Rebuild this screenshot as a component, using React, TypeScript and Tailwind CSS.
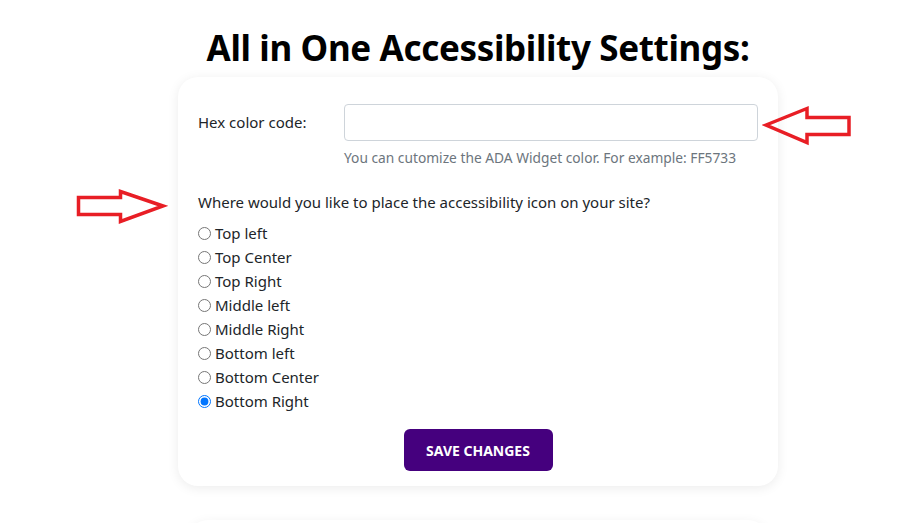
import React from "react";

const options = [
  "Top left",
  "Top Center",
  "Top Right",
  "Middle left",
  "Middle Right",
  "Bottom left",
  "Bottom Center",
  "Bottom Right",
];

function RightArrow() {
  return (
    <svg className="absolute left-[74px] top-[188px]" width="94" height="37" viewBox="0 0 94 37">
      <polygon
        points="4.5,9.5 46.5,9.5 46.5,3.5 89,18 46.5,33.5 46.5,26.5 4.5,26.5"
        fill="none"
        stroke="#e81e25"
        strokeWidth="3.5"
        strokeLinejoin="miter"
      />
    </svg>
  );
}

function LeftArrow() {
  return (
    <svg className="absolute left-[762px] top-[105px]" width="92" height="41" viewBox="0 0 92 41">
      <polygon
        points="4,20 45,3.5 45,12.5 87,12.5 87,29.5 45,29.5 45,37.5"
        fill="none"
        stroke="#e81e25"
        strokeWidth="3.5"
        strokeLinejoin="miter"
      />
    </svg>
  );
}

export default function App() {
  return (
    <div
      className="relative w-[923px] h-[523px] overflow-hidden bg-white text-[#212529]"
      style={{ fontFamily: '"Noto Sans", "Open Sans", sans-serif' }}
    >
      <div className="ml-[178px] w-[600px] flex flex-col items-center">
        <h1 className="mt-[26px] text-[35px] leading-[44px] font-bold text-black whitespace-nowrap tracking-[-0.35px]">
          All in One Accessibility Settings:
        </h1>
        <div className="mt-[7px] w-[600px] rounded-[20px] bg-white shadow-[0_2px_12px_rgba(0,0,0,0.08)] px-[20px] pt-[27px] pb-[15px] flex flex-col">
          <div className="flex items-center">
            <label className="w-[146px] text-[15px]">Hex color code:</label>
            <input
              type="text"
              className="flex-1 h-[37px] rounded-[4px] border border-[#ced4da] px-3 outline-none"
            />
          </div>
          <p className="ml-[146px] mt-[7px] text-[13.75px] leading-[19px] text-[#6c757d] whitespace-nowrap">
            You can cutomize the ADA Widget color. For example: FF5733
          </p>
          <p className="mt-[25px] text-[15px] leading-[20px] whitespace-nowrap">
            Where would you like to place the accessibility icon on your site?
          </p>
          <div className="mt-[9px] flex flex-col">
            {options.map((o) => (
              <label key={o} className="flex items-center h-[24px] text-[15px]">
                <input
                  type="radio"
                  name="pos"
                  defaultChecked={o === "Bottom Right"}
                  className="m-0 w-[13px] h-[13px] mr-[4px]"
                />
                {o}
              </label>
            ))}
          </div>
          <div className="mt-[16px] flex justify-center">
            <button className="w-[149px] h-[42px] rounded-[6px] bg-[#45007e] text-white text-[14px] font-bold">
              SAVE CHANGES
            </button>
          </div>
        </div>
        <div className="mt-[34px] w-[580px] h-[40px] rounded-[20px] bg-white shadow-[0_2px_12px_rgba(0,0,0,0.06)]" />
      </div>
      <RightArrow />
      <LeftArrow />
    </div>
  );
}
